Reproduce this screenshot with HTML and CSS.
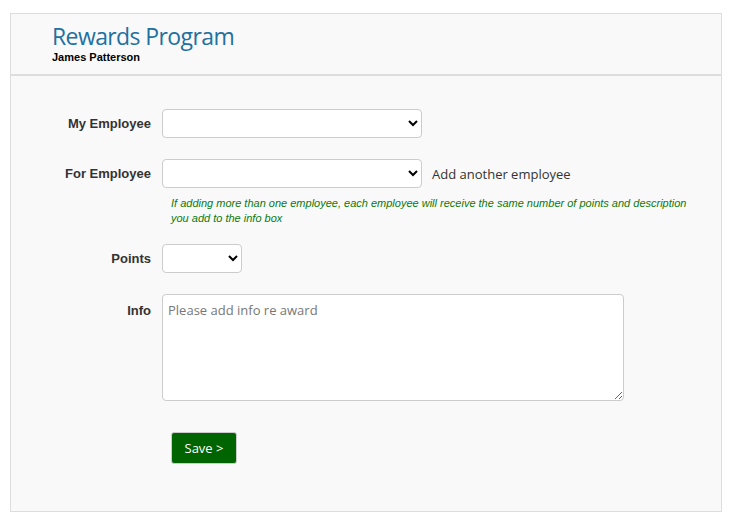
FILE: index.html
```html
<!DOCTYPE html>
<html>
<head>
<meta charset="utf-8">
<link rel="stylesheet" href="styles.css">
</head>
<body>
<div class="panel">
  <header class="head">
    <h1 class="title">Rewards Program</h1>
    <div class="user">James Patterson</div>
  </header>
  <form class="form">
    <div class="row row-first">
      <label class="label">My Employee</label>
      <select class="sel sel-wide"><option></option></select>
    </div>
    <div class="row row-second">
      <label class="label">For Employee</label>
      <select class="sel sel-wide"><option></option></select>
      <span class="add">Add another employee</span>
    </div>
    <p class="help">If adding more than one employee, each employee will receive the same number of points and description you add to the info box</p>
    <div class="row row-points">
      <label class="label">Points</label>
      <select class="sel sel-small"><option></option></select>
    </div>
    <div class="row row-info">
      <label class="label label-top">Info</label>
      <textarea class="info" placeholder="Please add info re award"></textarea>
    </div>
    <div class="actions">
      <button type="button" class="save">Save &gt;</button>
    </div>
  </form>
</div>
</body>
</html>
```

FILE: styles.css
```css
html, body {
  margin: 0;
  padding: 0;
  background: #ffffff;
}
.panel {
  margin: 13px 0 0 10px;
  width: 710px;
  height: 497px;
  border: 1px solid #dddddd;
  background: #f9f9f9;
  box-sizing: content-box;
}
.head {
  border-bottom: 2px solid #dddddd;
  padding-left: 41px;
  box-sizing: border-box;
  height: 62px;
  padding-top: 7px;
}
.title {
  margin: 0;
  font-family: "Open Sans", sans-serif;
  font-weight: 400;
  font-size: 23px;
  line-height: 30px;
  color: #22709f;
  letter-spacing: -0.6px;
}
.user {
  font-family: "Liberation Sans", Arial, sans-serif;
  font-weight: bold;
  font-size: 11px;
  line-height: 13px;
  color: #000;
}
.form {
  margin: 0;
  padding: 33px 0 0 0;
}
.row {
  display: flex;
  align-items: center;
}
.label {
  width: 151px;
  flex: none;
  text-align: right;
  padding-right: 11px;
  box-sizing: border-box;
  font-family: "Liberation Sans", Arial, sans-serif;
  font-weight: bold;
  font-size: 13px;
  color: #333333;
}
.sel {
  height: 29px;
  border: 1px solid #cccccc;
  border-radius: 4px;
  background: #ffffff;
  box-sizing: border-box;
  font-size: 13px;
}
.sel-wide { width: 260px; }
.sel-small { width: 80px; }
.row-second { margin-top: 21px; }
.add {
  margin-left: 10px;
  font-family: "Open Sans", sans-serif;
  font-size: 13px;
  color: #333;
}
.help {
  margin: 8px 30px 0 160px;
  font-family: "Liberation Sans", Arial, sans-serif;
  font-style: italic;
  font-size: 11px;
  line-height: 15px;
  color: #0b7a0b;
}
.row-points { margin-top: 18px; }
.row-info {
  margin-top: 21px;
  align-items: flex-start;
}
.label-top { padding-top: 9px; }
.info {
  width: 462px;
  height: 107px;
  border: 1px solid #cccccc;
  border-radius: 4px;
  background: #fff;
  box-sizing: border-box;
  padding: 6px 5px;
  margin: 0;
  font-family: "Open Sans", sans-serif;
  font-size: 13px;
}
.info::placeholder { color: #777; }
.actions {
  margin-top: 31px;
  padding-left: 160px;
}
.save {
  width: 66px;
  height: 32px;
  background: #006400;
  color: #fff;
  border: 1px solid #cccccc;
  border-radius: 3px;
  font-family: "Open Sans", sans-serif;
  font-size: 13px;
  padding: 0;
}
```
